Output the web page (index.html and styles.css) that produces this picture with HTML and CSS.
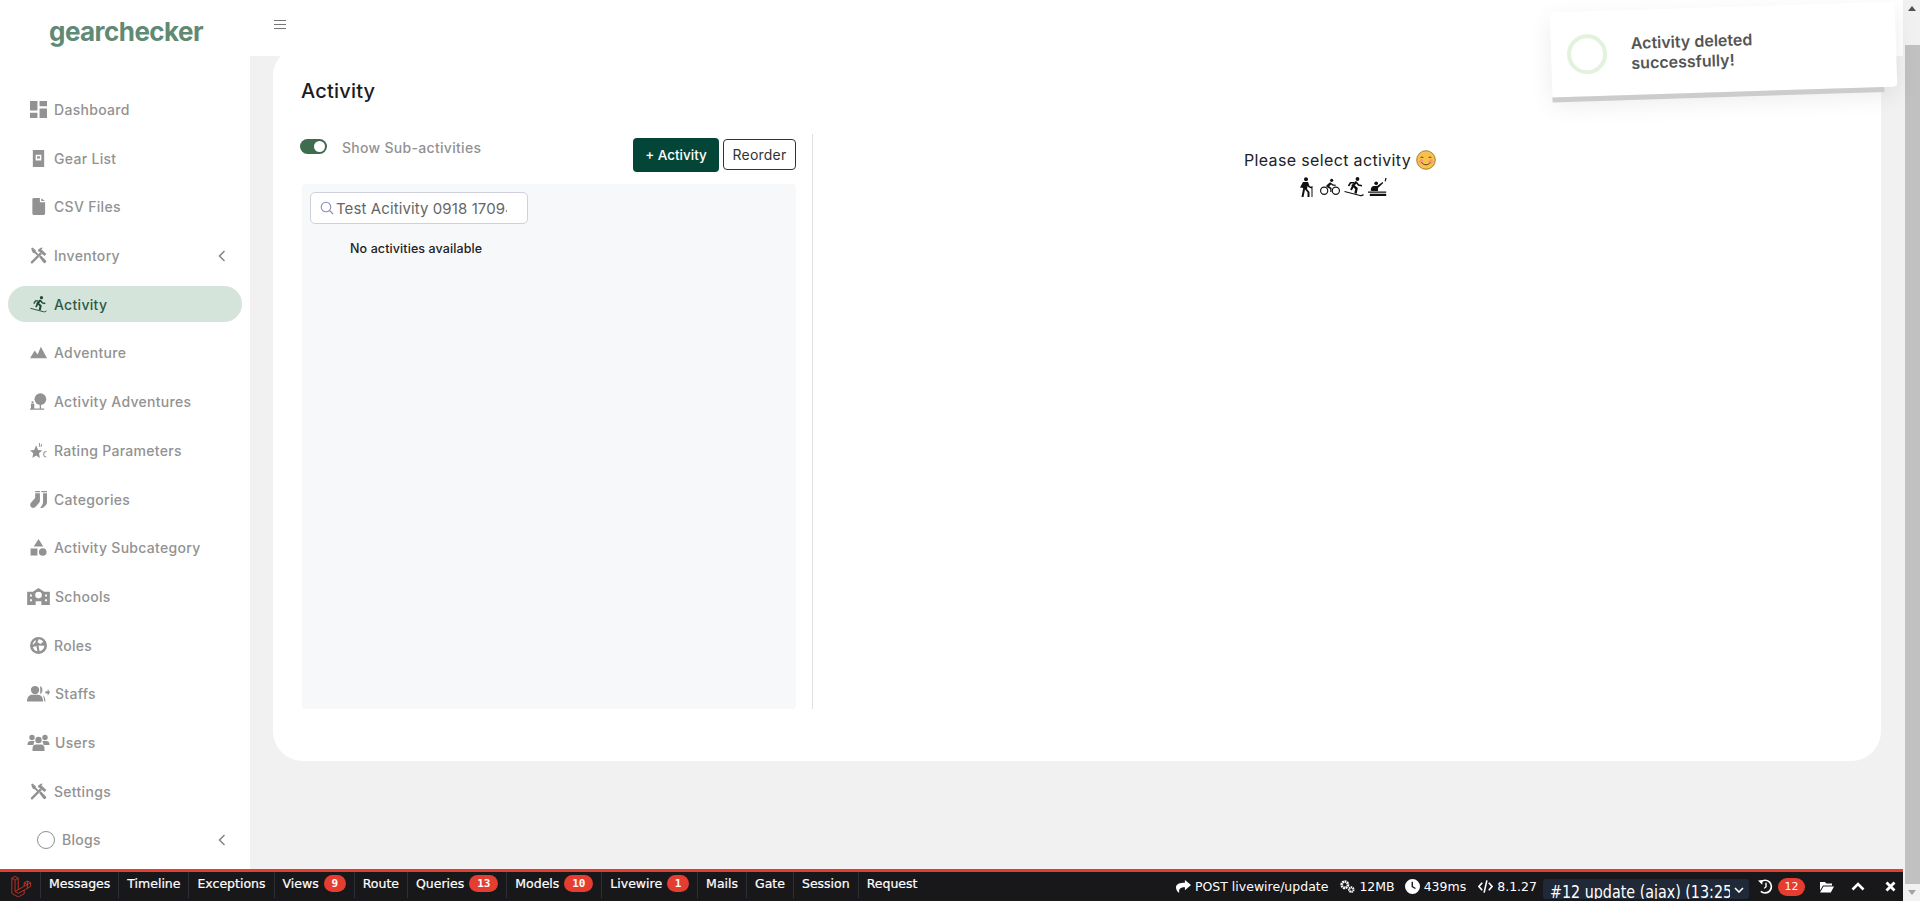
FILE: index.html
```html
<!DOCTYPE html>
<html>
<head>
  <meta charset="utf-8">
  <title>Activity - gearchecker</title>
  <link rel="stylesheet" href="styles.css">
</head>
<body>
  <svg class="defs" width="0" height="0">
    <symbol id="tools" viewBox="0 0 16 16">
      <path d="M1 13.6 9.6 5 11.2 6.6 2.6 15.2A1.1 1.1 0 0 1 1 13.6Z"/>
      <path d="M7.6 2.6 10 .6h2.4L10.6 2l4.8 4.6-1.8 1.9L8.6 4.2 7.6 4.2Z"/>
      <path d="M1 1.6 2.4.4 5.4 3l0 1.2 2.6 2.6-1.3 1.3L4 5.6H2.8ZM8.6 9.4l1.6-1.6 4.6 4.6a1.6 1.6 0 0 1-2.3 2.3Z"/>
    </symbol>
    <symbol id="chev" viewBox="0 0 8 12">
      <path d="M6.5 1 1.5 6l5 5" fill="none" stroke="currentColor" stroke-width="1.6"/>
    </symbol>
    <symbol id="ski" viewBox="0 0 20 20">
      <circle cx="13.500" cy="2" r="1.900"/>
      <g fill="none" stroke="currentColor">
        <path d="M12.500 4.800 9 8.500l3.500 3-1 5" stroke-width="2.400"/>
        <path d="M12 5l2.500 3 3.500.8" stroke-width="1.600"/>
        <path d="M10 5.800 6.500 5.800 4.500 9" stroke-width="1.600"/>
        <path d="M9 9 7 13" stroke-width="2"/>
        <path d="M.5 14.500l15.500 4c1 .3 2.500 0 3.500-1" stroke-width="1.100"/>
      </g>
    </symbol>
  </svg>

  <div class="page">
    <div class="app">
      <aside class="sidebar">
        <div class="logo">gearchecker</div>
        <nav class="menu">
          <a class="item"><svg class="ico" viewBox="0 0 16 16"><path d="M0 0h7v9H0ZM0 11h7v5H0ZM9 0h7v5H9ZM9 7h7v9H9Z"/></svg><span>Dashboard</span></a>
          <a class="item"><svg class="ico" viewBox="0 0 16 18"><path fill-rule="evenodd" d="M2 0h12v18H2ZM5 5v6h6V5ZM6.500 6.500h3v2.500h-3Z"/></svg><span>Gear List</span></a>
          <a class="item"><svg class="ico" viewBox="0 0 16 18"><path d="M1.500 1.500A1.500 1.500 0 0 1 3 0h6.500v4.500H15V16.500A1.500 1.500 0 0 1 13.500 18H3a1.500 1.500 0 0 1-1.500-1.500ZM11 .3 14.800 3.200H11Z"/></svg><span>CSV Files</span></a>
          <a class="item"><svg class="ico"><use href="#tools"/></svg><span>Inventory</span><svg class="arrow"><use href="#chev"/></svg></a>
          <a class="item active"><svg class="ico"><use href="#ski"/></svg><span>Activity</span></a>
          <a class="item"><svg class="ico" viewBox="0 0 18 12"><path d="M0 12 5 4l3 4 3.500-8L18 12Z"/></svg><span>Adventure</span></a>
          <a class="item"><svg class="ico" viewBox="0 0 18 18"><circle cx="11" cy="6.500" r="6.200"/><path d="M10.300 10h1.400v6.500h-1.400ZM0 16.500h15v1.300H0ZM1 11.500h3.500v6H1ZM1.700 8.800h2v2h-2Z"/></svg><span>Activity Adventures</span></a>
          <a class="item"><svg class="ico" viewBox="0 0 18 16"><path d="M6.500 2.500 8.500 7.500 13 8 9.500 11 10.500 16 6.500 13.300 2.500 16 3.500 11 0 8 4.500 7.500Z"/><path d="M9.500 0h1v4h-1ZM12 1l1 .3-1 3-1-.3ZM17.500 8.500a3.500 3.500 0 0 0 0 7v-1a2.500 2.500 0 0 1 0-5Z"/></svg><span>Rating Parameters</span></a>
          <a class="item"><svg class="ico" viewBox="0 0 18 18"><path d="M5.500 0h5v1.300h-5ZM5.500 2.300h5v7.700c0 1-.3 2-1 2.700L6 16.700C5 18 3 18.300 1.500 17.300.2 16.200-.3 14 .8 12.700L4 9c1-1 1.500-1.500 1.500-3ZM12 0h6v1.300h-6ZM12 2.300h6V12c0 1-.3 2-1 2.700l-2.500 2.500c-1 1-2.500 1-3.700.5 1.500-1.500 2.800-3 3-5.700V2.300Z"/></svg><span>Categories</span></a>
          <a class="item"><svg class="ico" viewBox="0 0 16 16"><path d="M8 0 12.500 7h-9ZM.5 9h6.500v6.500H.5Z"/><circle cx="12" cy="12.200" r="3.600"/></svg><span>Activity Subcategory</span></a>
          <a class="item"><svg class="ico wide" viewBox="0 0 24 18"><path fill-rule="evenodd" d="M12 0 18 4h6v14H15v-4H9v4H0V4h6ZM12 4a3.500 3.500 0 1 0 0 7 3.500 3.500 0 0 0 0-7ZM3 7v2h2V7ZM3 12v2h2v-2ZM19 7v2h2V7ZM19 12v2h2v-2Z"/></svg><span>Schools</span></a>
          <a class="item"><svg class="ico" viewBox="0 0 16 16"><path fill-rule="evenodd" d="M8 0a8 8 0 1 0 0 16A8 8 0 0 0 8 0ZM8 2c2 0 3.500 1 4.500 2.300L10 6.500 7 5ZM5.500 2.800 5.200 5 2.500 7.500C2.500 5.500 3.700 3.700 5.500 2.800ZM2.700 9.500 6 8.500l1 4.800C5 13.500 3.300 11.800 2.700 9.500ZM9 13.500 8 8l5.500.3c0 2.400-2 4.800-4.500 5.200Z"/></svg><span>Roles</span></a>
          <a class="item"><svg class="ico wide" viewBox="0 0 20 14"><circle cx="7" cy="4" r="3.600"/><path d="M0 14c0-4 2-6 4.500-6h5C12 8 14 10 14 14ZM11.500 .5c2.500 1 2.500 6 0 7ZM14 8.500c1.300 1 2 3 2 5.500h-1c0-2-.5-3.500-1-5.500ZM16 5h2V3l2 3-2 3V7h-2Z"/></svg><span>Staffs</span></a>
          <a class="item"><svg class="ico wide" viewBox="0 0 22 17"><circle cx="4.500" cy="3.500" r="2.700"/><circle cx="17.500" cy="3.500" r="2.700"/><circle cx="11" cy="6" r="3.200"/><path d="M0 11c0-3 1-4 3-4h3c.5 0 1 0 1.200.4C6.500 8.300 6 9.500 6 11ZM16 11c0-1.500-.5-2.700-1.200-3.600.2-.4.7-.4 1.200-.4h3c2 0 3 1 3 4ZM5 17v-2.500C5 12 6.500 10.500 8.500 10.500h5c2 0 3.500 1.500 3.500 4V17Z"/></svg><span>Users</span></a>
          <a class="item"><svg class="ico"><use href="#tools"/></svg><span>Settings</span></a>
          <a class="item sub"><i class="ring"></i><span>Blogs</span><svg class="arrow"><use href="#chev"/></svg></a>
        </nav>
      </aside>

      <div class="main">
        <header class="topbar">
          <svg class="burger" viewBox="0 0 12 9"><path d="M0 .5h12M0 4.500h12M0 8.500h12" stroke="#777" stroke-width="1" fill="none"/></svg>
        </header>
        <section class="card">
          <h1>Activity</h1>
          <div class="cols">
            <div class="left">
              <div class="tools">
                <div class="switch-row">
                  <span class="switch"><i></i></span>
                  <span class="switch-label">Show Sub-activities</span>
                </div>
                <div class="btns">
                  <button class="btn primary">+ Activity</button>
                  <button class="btn outline">Reorder</button>
                </div>
              </div>
              <div class="panel">
                <div class="search">
                  <svg viewBox="0 0 14 14"><circle cx="6" cy="6" r="4.800" fill="none" stroke="#8a8abf" stroke-width="1.100"/><path d="M9.500 9.500 13 13" stroke="#8a8abf" stroke-width="1.100"/></svg>
                  <span class="query">Test Acitivity 0918 170941</span>
                </div>
                <p class="empty">No activities available</p>
              </div>
            </div>
            <div class="right">
              <p class="hint">Please select activity
                <svg class="smile" viewBox="0 0 20 20"><circle cx="10" cy="10" r="9.300" fill="#f7c14a" stroke="#8a6a25" stroke-width=".8"/><circle cx="5.200" cy="11.500" r="2.200" fill="#f39a7e"/><circle cx="14.800" cy="11.500" r="2.200" fill="#f39a7e"/><path d="M4.500 8c.7-1.300 2.300-1.300 3 0M12.500 8c.7-1.300 2.300-1.300 3 0M5.800 12.500c1.500 3 6.900 3 8.400 0" fill="none" stroke="#5a4015" stroke-width="1"/></svg>
              </p>
              <div class="sports">
                <svg viewBox="0 0 18 20"><circle cx="9" cy="2.200" r="2"/><path d="M6 5h5l1.500 4 2 1v-1h1v11h-1v-8.500l-3-1.300-.8-1.500-.7 3.300 2.500 3V20h-2v-4.800L8 12.500 6.500 20h-2L6.200 11 3 10.500Z"/></svg>
                <svg viewBox="0 0 24 20"><circle cx="14" cy="2" r="1.900"/><circle cx="5" cy="14.500" r="4.300" fill="none" stroke="#111" stroke-width="1.400"/><circle cx="19" cy="14.500" r="4.300" fill="none" stroke="#111" stroke-width="1.400"/><path d="M12 4.200 16 7l3 .2v1.400l-3.700-.2-2-1.300-2.300 2 2.800 2V16h-1.500v-3.500L8 10c-.6-.6-.6-1.500 0-2Z"/></svg>
                <svg><use href="#ski"/></svg>
                <svg viewBox="0 0 22 20"><circle cx="9" cy="6" r="2"/><path d="M19 0h1.500l-1 4-1.200-.3ZM6 9h4l6-4.500.8 1L11 11v3.500H5L3 14c0-2 1-5 3-5ZM0 15h20v1.200H0ZM2 17.300h18V20H2Z"/></svg>
              </div>
            </div>
          </div>
        </section>
      </div>
    </div>

    <footer class="debugbar">
      <svg class="lara" viewBox="0 0 22 24" fill="none" stroke="#d8352a" stroke-width=".9"><path d="M1 3.500 4.500 1.500 8 3.500V16l6.500-3.700V8.500L18 6.500 21.500 8.500v4l-7 4v4L8 24 1 20ZM1 3.500 4.500 5.500 8 3.500M4.500 5.500V18l3.500 2 6.500-3.500M4.500 18 8 16M14.500 8.500 18 10.500 21.500 8.500M18 6.500v4M14.500 12.300 18 10.500v4"/></svg>
      <div class="tabs">
        <a class="tab">Messages</a>
        <a class="tab">Timeline</a>
        <a class="tab">Exceptions</a>
        <a class="tab">Views <b class="badge">9</b></a>
        <a class="tab">Route</a>
        <a class="tab">Queries <b class="badge two">13</b></a>
        <a class="tab">Models <b class="badge two">10</b></a>
        <a class="tab">Livewire <b class="badge">1</b></a>
        <a class="tab">Mails</a>
        <a class="tab">Gate</a>
        <a class="tab">Session</a>
        <a class="tab">Request</a>
      </div>
      <div class="stats">
        <span class="stat"><svg viewBox="0 0 16 14"><path d="M9.500 0 16 5.500 9.500 11V7.700C5 7.700 2.500 9 3.500 14 .8 12 0 9.800 0 8c0-3.500 4-5 9.500-5Z"/></svg>POST livewire/update</span>
        <span class="stat"><svg viewBox="0 0 17 15"><circle cx="5.500" cy="5.500" r="3.600" fill="none" stroke="#fff" stroke-width="3" stroke-dasharray="2 .7"/><circle cx="12.800" cy="11" r="2.500" fill="none" stroke="#fff" stroke-width="2.400" stroke-dasharray="1.500 .5"/></svg>12MB</span>
        <span class="stat wider"><svg viewBox="0 0 16 16"><path fill-rule="evenodd" d="M8 0a8 8 0 1 0 0 16A8 8 0 0 0 8 0ZM7 3h1.500v4.700l3 1.800-.7 1.200L7 8.500Z"/></svg>439ms</span>
        <span class="stat"><svg viewBox="0 0 16 14"><path d="M4.500 3 1 7l3.500 4M11.500 3 15 7l-3.500 4M9.500 .5 6.500 13.500" fill="none" stroke="#fff" stroke-width="1.700"/></svg>8.1.27</span>
        <div class="request-select"><span>#12 update (ajax) (13:25</span><svg viewBox="0 0 10 6"><path d="M1 1l4 4 4-4" fill="none" stroke="#fff" stroke-width="1.600"/></svg></div>
        <svg class="act history" viewBox="0 0 16 16"><path d="M2.500 3.500A6.800 6.800 0 1 1 3 13.200" fill="none" stroke="#fff" stroke-width="1.800"/><path d="M0 1.500 5 1 4.500 6ZM7.800 4h1.500v4.500l-2.300 2-.9-1 1.700-1.600Z"/></svg>
        <b class="badge big">12</b>
        <svg class="act folder" viewBox="0 0 14 12"><path d="M0 1h5l1.300 1.500H12V4.500H3L0 9.500ZM3.500 5.500H14L10.800 11.500H0Z"/></svg>
        <svg class="act caret" viewBox="0 0 14 9"><path d="M1.500 7.500 7 2l5.500 5.500" fill="none" stroke="#fff" stroke-width="2.600"/></svg>
        <svg class="act close" viewBox="0 0 11 11"><path d="M1.500 1.500l8 8M9.500 1.500l-8 8" fill="none" stroke="#fff" stroke-width="2.800"/></svg>
      </div>
    </footer>
  </div>

  <div class="scrollbar">
    <i class="up"></i>
    <div class="thumb"></div>
    <i class="down"></i>
  </div>

  <div class="toast">
    <i class="toast-ring"></i>
    <p>Activity deleted successfully!</p>
    <span class="toast-bar"></span>
  </div>
</body>
</html>
```

FILE: styles.css
```css
* {
  box-sizing: border-box;
}
html, body {
  height: 901px;
}
body {
  margin: 0;
  display: flex;
  overflow: hidden;
  font-family: Inter, "Liberation Sans", sans-serif;
  background: #f1f1f1;
  color: #222222;
}
.defs {
  position: absolute;
}
.page {
  flex: 1;
  min-width: 0;
  display: flex;
  flex-direction: column;
}
.app {
  flex: 1;
  min-height: 0;
  display: flex;
}

/* sidebar */
.sidebar {
  width: 250px;
  background: #ffffff;
  padding: 0 8px;
}
.logo {
  height: 91.5px;
  padding: 16px 0 0 41px;
  font-size: 26px;
  font-weight: 700;
  letter-spacing: -0.55px;
  color: #608a74;
}
.menu {
  display: flex;
  flex-direction: column;
  gap: 12.7px;
}
.item {
  height: 36px;
  display: flex;
  align-items: center;
  gap: 7px;
  padding-left: 20px;
  padding-right: 16px;
  border-radius: 18px;
  font-size: 14px;
  font-weight: 500;
  letter-spacing: 0.3px;
  color: #929292;
}
.item .ico {
  width: 17px;
  height: 17px;
  flex: none;
  margin-left: 2px;
  fill: #929292;
}
.item .ico.wide {
  width: 23px;
  margin-left: -1px;
  margin-right: -2px;
}
.item .arrow {
  width: 8px;
  height: 12px;
  margin-left: auto;
  color: #888888;
}
.item.active {
  background: #d5e4da;
  color: #2d5a46;
}
.item.active .ico {
  fill: #1f4a38;
  color: #1f4a38;
}
.item.sub {
  padding-left: 29px;
}
.ring {
  width: 18px;
  height: 18px;
  flex: none;
  border: 1.5px solid #8a8f96;
  border-radius: 50%;
}

/* main */
.main {
  flex: 1;
  min-width: 0;
  display: flex;
  flex-direction: column;
}
.topbar {
  height: 56px;
  flex: none;
  background: #ffffff;
  position: relative;
  z-index: 1;
  padding: 20px 0 0 24px;
}
.burger {
  display: block;
  width: 12px;
  height: 9px;
}
.card {
  height: 715px;
  margin: -10px 22px 0 23px;
  padding: 33px 28px 0;
  background: #ffffff;
  border-radius: 30px;
}
.card h1 {
  margin: 0 0 31px;
  font-size: 20px;
  font-weight: 500;
  line-height: 24px;
  letter-spacing: 0.2px;
  color: #1c1c1c;
}
.cols {
  display: flex;
}
.left {
  width: 512px;
  height: 575px;
  padding: 0 16px 0 1px;
  border-right: 1px solid #e0e0e0;
  display: flex;
  flex-direction: column;
}
.tools {
  height: 50px;
  flex: none;
  display: flex;
  justify-content: space-between;
  padding-top: 4px;
}
.switch-row {
  display: flex;
  align-items: flex-start;
  gap: 15px;
  margin-left: -2px;
  padding-top: 1px;
}
.switch {
  width: 27px;
  height: 15px;
  background: #3f6b4f;
  border-radius: 8px;
  padding: 2px;
  display: flex;
  justify-content: flex-end;
}
.switch i {
  width: 11px;
  height: 11px;
  background: #ffffff;
  border-radius: 50%;
}
.switch-label {
  font-size: 14px;
  font-weight: 500;
  line-height: 18px;
  letter-spacing: 0.3px;
  color: #929292;
}
.btns {
  display: flex;
  align-items: flex-start;
  gap: 4px;
}
.btn {
  font-family: inherit;
  font-size: 13.5px;
  font-weight: 500;
  border-radius: 4px;
  padding: 0;
}
.btn.primary {
  width: 86px;
  height: 34px;
  background: #034638;
  border: none;
  color: #ffffff;
}
.btn.outline {
  width: 73px;
  height: 31px;
  margin-top: 1px;
  background: #ffffff;
  border: 1px solid #333333;
  font-size: 14px;
  font-weight: 400;
  letter-spacing: 0.2px;
  color: #333333;
}
.panel {
  flex: 1;
  background: #f7f8fa;
  border-radius: 4px;
  padding: 8px;
}
.search {
  width: 218px;
  height: 32px;
  display: flex;
  align-items: center;
  gap: 2px;
  padding-left: 9px;
  background: #ffffff;
  border: 1px solid #cfd0dc;
  border-radius: 5px;
  overflow: hidden;
}
.search svg {
  width: 14px;
  height: 14px;
  flex: none;
}
.query {
  width: 171px;
  overflow: hidden;
  white-space: nowrap;
  font-size: 15px;
  letter-spacing: 0.1px;
  color: #666666;
}
.empty {
  margin: 17px 0 0 40px;
  font-size: 12.5px;
  font-weight: 500;
  line-height: 16px;
  letter-spacing: 0.1px;
  color: #222222;
}
.right {
  flex: 1;
  padding: 16px 0 0 14px;
  text-align: center;
}
.hint {
  margin: 0;
  display: flex;
  justify-content: center;
  align-items: center;
  gap: 5px;
  font-size: 16px;
  line-height: 20px;
  letter-spacing: 0.35px;
  color: #222222;
}
.smile {
  width: 20px;
  height: 20px;
}
.sports {
  display: flex;
  justify-content: center;
  align-items: center;
  gap: 4px;
  margin-top: 7px;
  padding-left: 3px;
  color: #111111;
}
.sports svg {
  width: 20px;
  height: 20px;
  fill: #111111;
}

/* debug bar */
.debugbar {
  height: 32px;
  flex: none;
  display: flex;
  align-items: stretch;
  background: #18181b;
  border-top: 3px solid #e53e30;
  font-family: "DejaVu Sans", sans-serif;
  font-size: 12.5px;
  color: #ffffff;
}
.lara {
  width: 22px;
  height: 22px;
  margin: 3px 8px 0 10px;
  flex: none;
}
.tabs {
  display: flex;
  height: 26px;
}
.tab {
  display: flex;
  align-items: center;
  gap: 5px;
  padding: 0 8px 3px 8px;
  border-left: 1px solid #2b2f38;
  -webkit-text-stroke: 0.2px #ffffff;
  white-space: nowrap;
}
.badge {
  min-width: 22px;
  height: 17px;
  padding: 0 5px;
  display: inline-flex;
  align-items: center;
  justify-content: center;
  background: #e53e30;
  border-radius: 9px;
  font-family: "DejaVu Sans Mono", monospace;
  font-size: 11px;
  font-weight: 700;
  color: #ffffff;
  -webkit-text-stroke: 0;
}
.badge.two {
  min-width: 29px;
}
.stats {
  margin-left: auto;
  display: flex;
  align-items: center;
  padding-right: 7px;
}
.stat {
  display: flex;
  align-items: center;
  gap: 4px;
  margin-right: 10px;
  white-space: nowrap;
}
.stat:first-child {
  margin-right: 12px;
}
.stat.wider {
  margin-right: 12px;
}
.stat svg {
  width: 15px;
  height: 15px;
  fill: #ffffff;
}
.request-select {
  width: 206px;
  height: 20px;
  margin: 4px 0 0 -4px;
  padding: 6.5px 0 0 7px;
  display: flex;
  justify-content: space-between;
  background: #1f2937;
  border-radius: 3px;
  overflow: hidden;
  font-size: 14.3px;
  line-height: 17px;
  white-space: nowrap;
}
.request-select span {
  width: 180px;
  height: 17px;
  overflow: hidden;
  transform: scaleY(1.2);
  transform-origin: 0 13.5px;
}
.request-select svg {
  width: 10px;
  height: 6px;
  margin: 2px 5px 0 0;
  flex: none;
}
.act {
  flex: none;
  fill: #ffffff;
}
.history {
  width: 15px;
  height: 15px;
  margin: 0 5px 0 9px;
}
.badge.big {
  width: 27px;
  height: 18px;
  font-family: "DejaVu Sans", sans-serif;
  font-weight: 400;
}
.folder {
  width: 14px;
  height: 12px;
  margin-left: 15px;
}
.caret {
  width: 14px;
  height: 9px;
  margin-left: 17px;
}
.close {
  width: 11px;
  height: 11px;
  margin-left: 20px;
}

/* page scrollbar */
.scrollbar {
  width: 17px;
  flex: none;
  display: flex;
  flex-direction: column;
  align-items: flex-end;
  background: #f1f1f1;
}
.scrollbar .thumb {
  width: 15px;
  height: 839px;
  background: #c1c1c1;
}
.scrollbar .up,
.scrollbar .down {
  width: 15px;
  height: 45px;
  display: block;
  position: relative;
}
.scrollbar .down {
  height: 17px;
}
.scrollbar .up::after,
.scrollbar .down::after {
  content: "";
  position: absolute;
  left: 3px;
  border-left: 4px solid transparent;
  border-right: 4px solid transparent;
}
.scrollbar .up::after {
  top: 6px;
  border-bottom: 5px solid #505050;
}
.scrollbar .down::after {
  top: 6px;
  border-top: 5px solid #a3a3a3;
}

/* toast */
.toast {
  position: absolute;
  z-index: 5;
  left: 1551px;
  top: 7px;
  width: 345px;
  height: 85px;
  display: flex;
  align-items: center;
  gap: 24px;
  padding: 0 40px 0 16px;
  background: #ffffff;
  border-radius: 4px;
  transform: rotate(-1.8deg);
  box-shadow: 0 8px 24px rgba(0, 0, 0, 0.08);
}
.toast-ring {
  width: 40px;
  height: 40px;
  flex: none;
  border: 4px solid #e3f2dc;
  border-radius: 50%;
}
.toast p {
  width: 150px;
  margin: 0;
  font-size: 16px;
  font-weight: 600;
  line-height: 20px;
  color: #555555;
}
.toast-bar {
  position: absolute;
  left: 0;
  bottom: -5px;
  width: 332px;
  height: 5px;
  background: #cccccc;
}
```
